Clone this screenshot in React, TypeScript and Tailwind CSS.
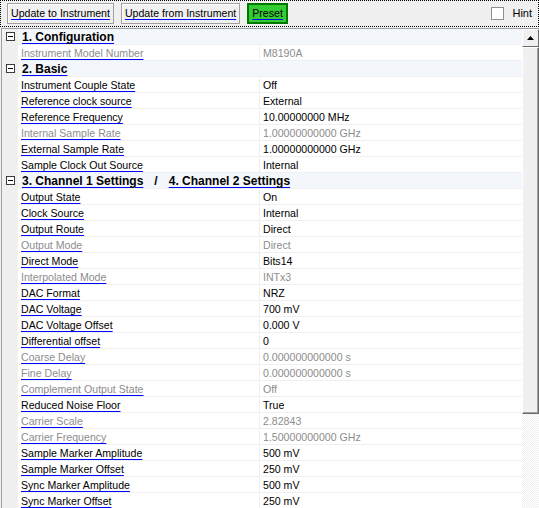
type Row =
  | { kind: 'cat'; parts: string[] }
  | { kind: 'prop'; name: string; value: string; dis?: boolean };

const rows: Row[] = [
  { kind: 'cat', parts: ['1. Configuration'] },
  { kind: 'prop', name: 'Instrument Model Number', value: 'M8190A', dis: true },
  { kind: 'cat', parts: ['2. Basic'] },
  { kind: 'prop', name: 'Instrument Couple State', value: 'Off' },
  { kind: 'prop', name: 'Reference clock source', value: 'External' },
  { kind: 'prop', name: 'Reference Frequency', value: '10.00000000 MHz' },
  { kind: 'prop', name: 'Internal Sample Rate', value: '1.00000000000 GHz', dis: true },
  { kind: 'prop', name: 'External Sample Rate', value: '1.00000000000 GHz' },
  { kind: 'prop', name: 'Sample Clock Out Source', value: 'Internal' },
  { kind: 'cat', parts: ['3. Channel 1 Settings', '4. Channel 2 Settings'] },
  { kind: 'prop', name: 'Output State', value: 'On' },
  { kind: 'prop', name: 'Clock Source', value: 'Internal' },
  { kind: 'prop', name: 'Output Route', value: 'Direct' },
  { kind: 'prop', name: 'Output Mode', value: 'Direct', dis: true },
  { kind: 'prop', name: 'Direct Mode', value: 'Bits14' },
  { kind: 'prop', name: 'Interpolated Mode', value: 'INTx3', dis: true },
  { kind: 'prop', name: 'DAC Format', value: 'NRZ' },
  { kind: 'prop', name: 'DAC Voltage', value: '700 mV' },
  { kind: 'prop', name: 'DAC Voltage Offset', value: '0.000 V' },
  { kind: 'prop', name: 'Differential offset', value: '0' },
  { kind: 'prop', name: 'Coarse Delay', value: '0.000000000000 s', dis: true },
  { kind: 'prop', name: 'Fine Delay', value: '0.000000000000 s', dis: true },
  { kind: 'prop', name: 'Complement Output State', value: 'Off', dis: true },
  { kind: 'prop', name: 'Reduced Noise Floor', value: 'True' },
  { kind: 'prop', name: 'Carrier Scale', value: '2.82843', dis: true },
  { kind: 'prop', name: 'Carrier Frequency', value: '1.50000000000 GHz', dis: true },
  { kind: 'prop', name: 'Sample Marker Amplitude', value: '500 mV' },
  { kind: 'prop', name: 'Sample Marker Offset', value: '250 mV' },
  { kind: 'prop', name: 'Sync Marker Amplitude', value: '500 mV' },
  { kind: 'prop', name: 'Sync Marker Offset', value: '250 mV' },
];

const link = 'underline decoration-[#0000ff] decoration-1 underline-offset-[2px]';

function ToolButton({ label, green }: { label: string; green?: boolean }) {
  return (
    <button
      className={
        green
          ? 'h-[21px] px-[3px] bg-[#33cc33] border-2 border-[#007700] text-[#000000]'
          : 'h-[21px] px-[3px] bg-[#f0f0f0] border border-[#a0a0a0] shadow-[inset_1px_1px_0_#fff] text-black'
      }
    >
      <span className={link}>{label}</span>
    </button>
  );
}

function Minus() {
  return (
    <div className="w-[9px] h-[9px] border border-[#3c3c3c] bg-white flex items-center justify-center">
      <div className="w-[5px] h-px bg-black" />
    </div>
  );
}

export default function App() {
  return (
    <div
      className="w-[539px] h-[508px] overflow-hidden bg-[#f0f0f0] flex flex-col text-[10.6px] leading-none text-black"
      style={{ fontFamily: '"Liberation Sans", Arial, sans-serif' }}
    >
      {/* toolbar */}
      <div className="h-[27px] shrink-0 border border-dotted border-black flex items-center pl-[6px] pr-[6px] gap-[7px]">
        <ToolButton label="Update to Instrument" />
        <ToolButton label="Update from Instrument" />
        <ToolButton label="Preset" green />
        <div className="flex-1" />
        <label className="flex items-center gap-[8px]">
          <span className="w-[13px] h-[13px] bg-white border border-[#8e8f8f]" />
          <span className="text-[11px]">Hint</span>
        </label>
      </div>

      {/* property grid */}
      <div className="flex-1 flex ml-px mt-px border-l border-t border-[#a0a0a0] min-h-0">
        <div className="flex-1 flex flex-col bg-white min-w-0">
          {rows.map((r, i) =>
            r.kind === 'cat' ? (
              <div key={i} className="h-[16px] shrink-0 flex bg-[#f3f6fb] border-b border-[#f0f0f0]">
                <div className="w-[16px] shrink-0 bg-[#f0f0f0] flex items-center justify-center">
                  <Minus />
                </div>
                <div className="flex items-center pt-px pl-[4px] font-bold text-[12px] whitespace-nowrap">
                  {r.parts.map((p, j) => (
                    <span key={j} className="flex items-center">
                      {j > 0 && <span className="px-[11px]">/</span>}
                      <span className={link}>{p}</span>
                    </span>
                  ))}
                </div>
              </div>
            ) : (
              <div key={i} className="h-[16px] shrink-0 flex border-b border-[#f0f0f0]">
                <div className="w-[16px] shrink-0 bg-[#f0f0f0]" />
                <div
                  className={`w-[242px] shrink-0 pl-[3px] pt-px flex items-center border-r border-[#f0f0f0] whitespace-nowrap ${
                    r.dis ? 'text-[#8d8d8d]' : 'text-black'
                  }`}
                >
                  <span className={link}>{r.name}</span>
                </div>
                <div
                  className={`pl-[3px] pt-px flex items-center whitespace-nowrap ${
                    r.dis ? 'text-[#8d8d8d]' : 'text-black'
                  }`}
                >
                  {r.value}
                </div>
              </div>
            )
          )}
        </div>

        {/* scrollbar */}
        <div className="w-[17px] shrink-0 flex flex-col bg-[repeating-conic-gradient(#f0f0f0_0%_25%,#ffffff_0%_50%)] bg-[length:2px_2px]">
          <div className="h-[18px] shrink-0 bg-[#f0f0f0] border border-t-white border-l-white border-r-[#696969] border-b-[#696969] flex items-center justify-center">
            <svg width="7" height="4" viewBox="0 0 7 4">
              <path d="M3.5 0 L7 4 L0 4 Z" fill="#000" />
            </svg>
          </div>
          <div className="h-[367px] shrink-0 bg-[#f0f0f0] border border-t-white border-l-white border-r-[#696969] border-b-[#696969] shadow-[inset_-1px_-1px_0_#a0a0a0]" />
        </div>
      </div>
    </div>
  );
}
